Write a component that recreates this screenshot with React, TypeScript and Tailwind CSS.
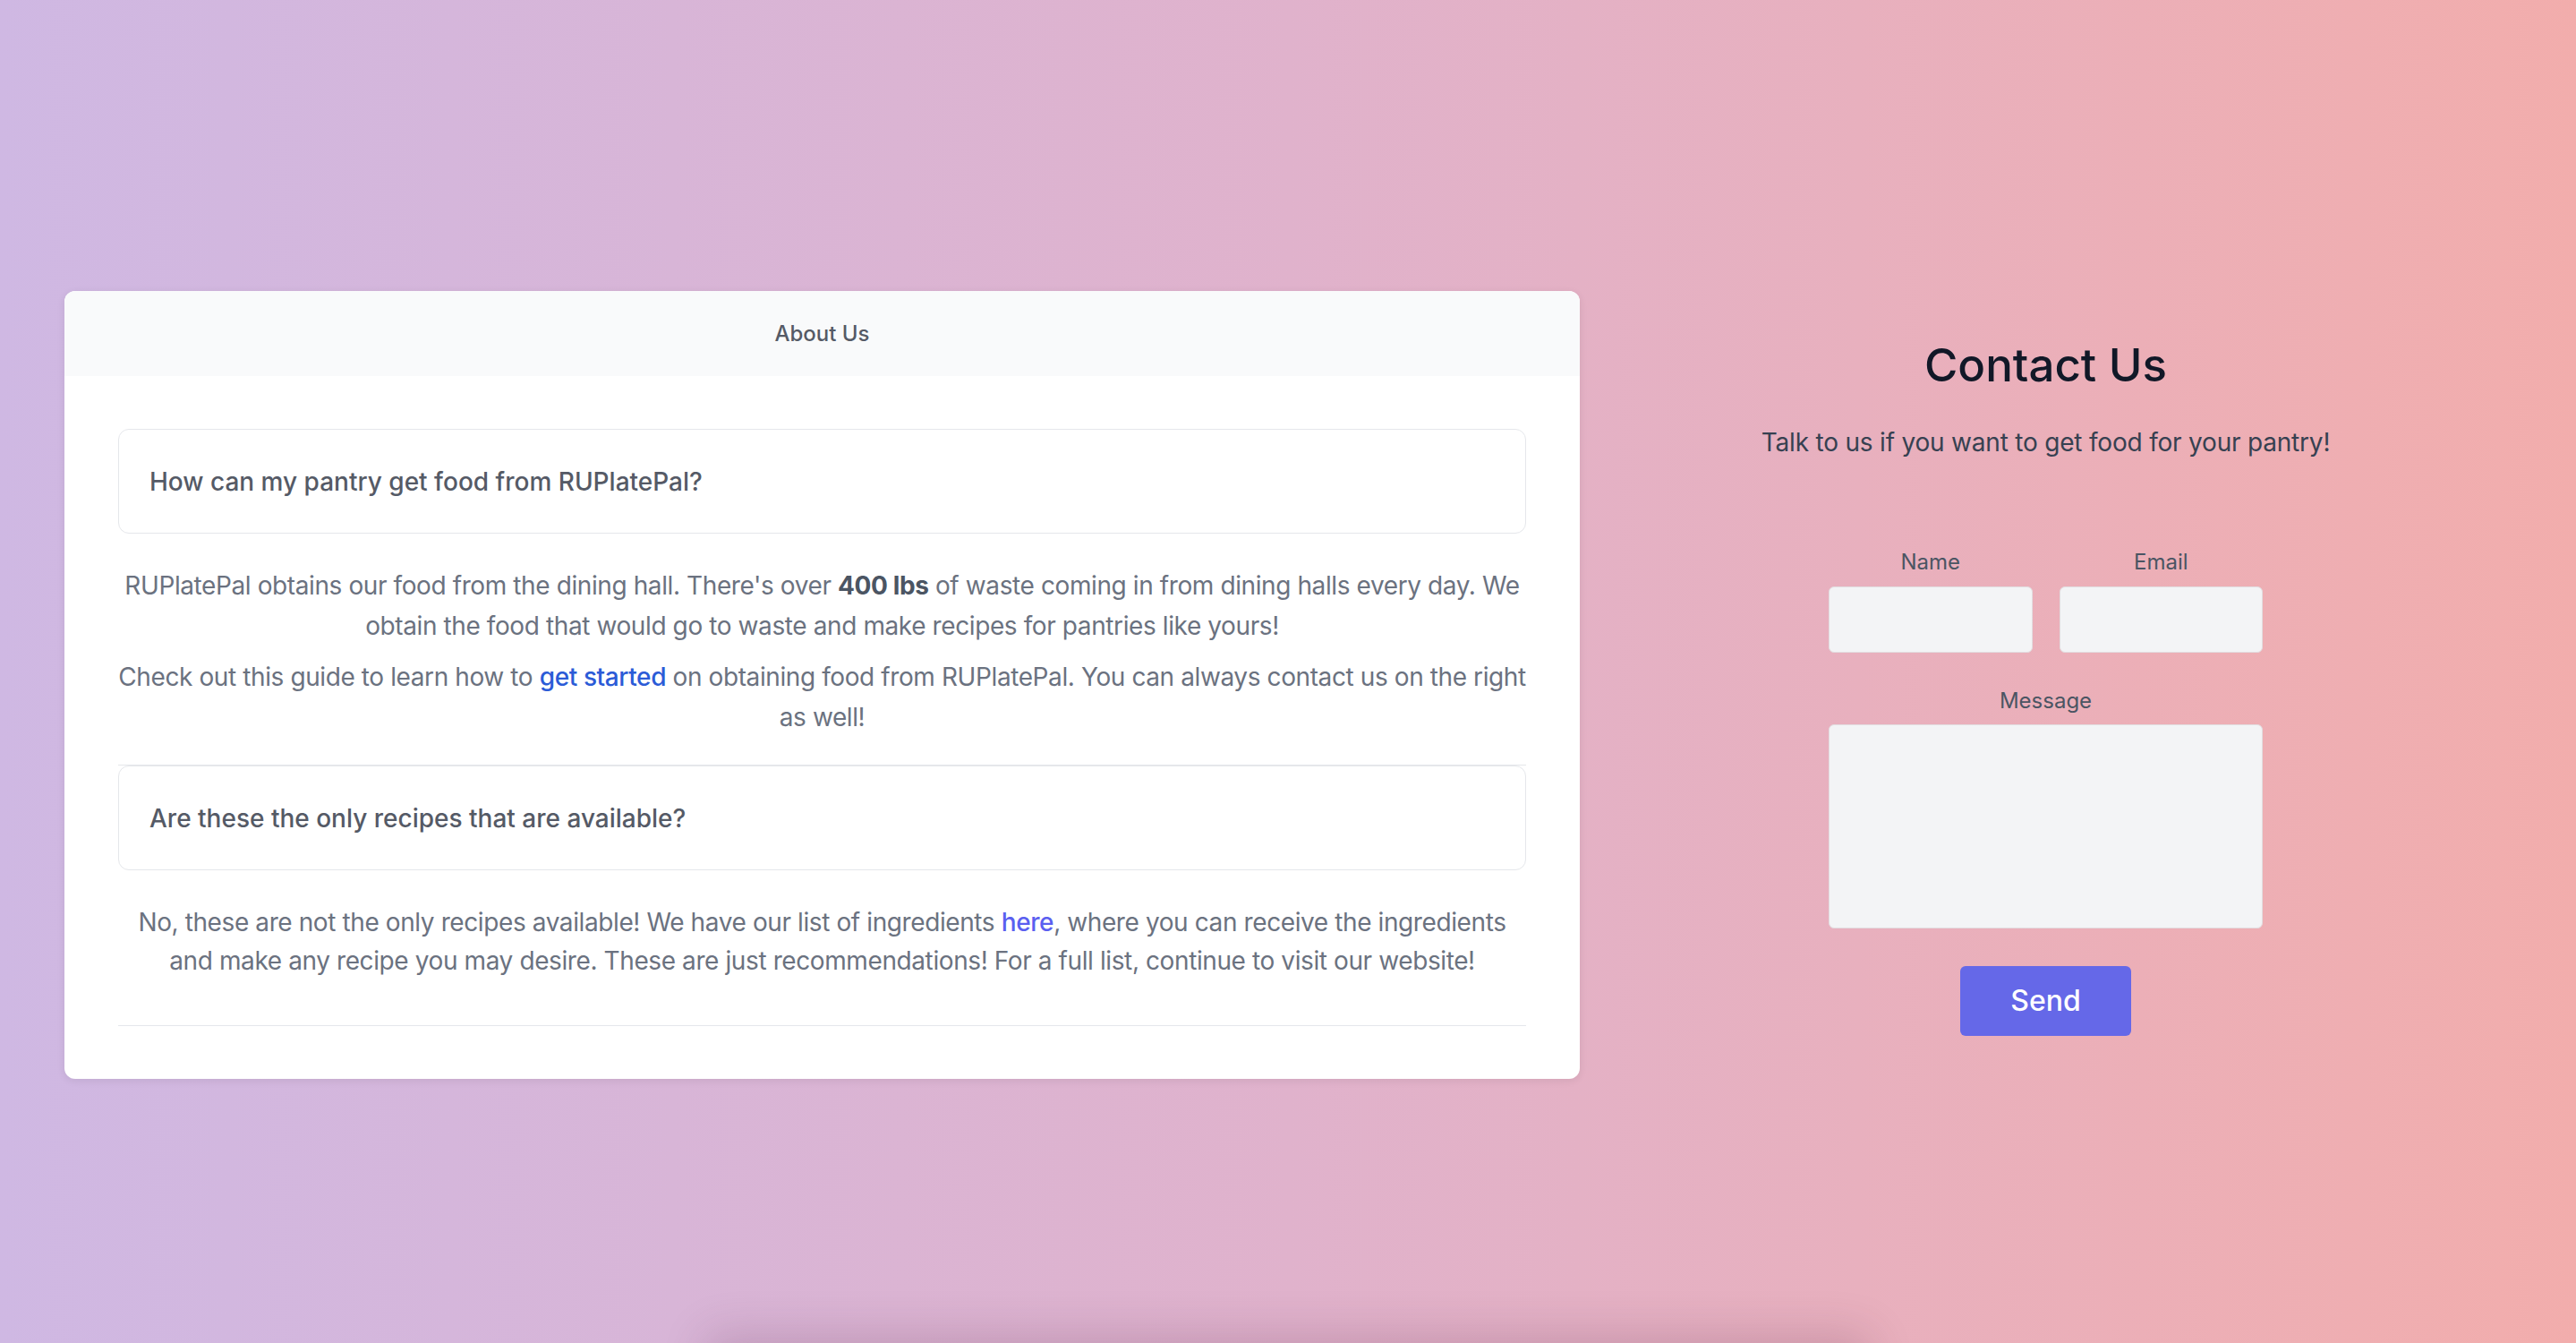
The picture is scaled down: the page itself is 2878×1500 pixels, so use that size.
export default function App() {
  return (
    <div className="min-h-screen bg-gradient-to-r from-[#cfb8e3] via-[#e0b2cc] to-[#f2adac] font-['Inter',sans-serif]">
      <section className="flex h-[1500px] items-start px-[72px] pt-[325px]">
        <div className="flex w-full items-center">
          {/* About card */}
          <div className="w-[1693px] shrink-0 overflow-hidden rounded-xl bg-white shadow-[0_2px_10px_rgba(0,0,0,0.08)]">
            <div className="flex h-[95px] items-center justify-center bg-[#f9fafb] text-[24px] font-medium text-[#555a66]">
              About Us
            </div>
            <div className="px-[60px] pb-[59px] pt-[59px]">
              <div className="border-b border-[#e5e7eb] pb-[30px]">
                <div className="flex h-[117px] items-center rounded-xl border border-[#e5e7eb] px-[34px] text-[28px] font-medium text-[#555a66]">
                  How can my pantry get food from RUPlatePal?
                </div>
                <div className="pt-[36px] text-center text-[28px] leading-[45px] tracking-[-0.4px] text-[#6b7280]">
                  <p>
                    RUPlatePal obtains our food from the dining hall. There's over{" "}
                    <span className="font-bold text-[#4b5563]">400 lbs</span> of waste coming in from
                    dining halls every day. We obtain the food that would go to waste and make recipes
                    for pantries like yours!
                  </p>
                  <p className="mt-[12px]">
                    Check out this guide to learn how to{" "}
                    <a href="#" className="font-medium text-[#2b5bd7]">
                      get started
                    </a>{" "}
                    on obtaining food from RUPlatePal. You can always contact us on the right as well!
                  </p>
                </div>
              </div>
              <div className="border-b border-[#e5e7eb] pb-[50px]">
                <div className="flex h-[117px] items-center rounded-xl border border-[#e5e7eb] px-[34px] text-[28px] font-medium text-[#555a66]">
                  Are these the only recipes that are available?
                </div>
                <div className="pt-[37px] text-center text-[28px] leading-[43px] tracking-[-0.4px] text-[#6b7280]">
                  <p>
                    No, these are not the only recipes available! We have our list of ingredients{" "}
                    <a href="#" className="font-medium text-[#5b5ff0]">
                      here
                    </a>
                    , where you can receive the ingredients and make any recipe you may desire. These
                    are just recommendations! For a full list, continue to visit our website!
                  </p>
                </div>
              </div>
            </div>
          </div>

          {/* Contact */}
          <div className="flex flex-1 flex-col items-center pt-[8px]">
            <h1 className="text-[51px] font-medium leading-none text-[#111827]">Contact Us</h1>
            <p className="mt-[40px] text-[28px] leading-[42px] tracking-[-0.2px] text-[#374151]">
              Talk to us if you want to get food for your pantry!
            </p>
            <form className="mt-[95px] flex w-[485px] flex-col items-center">
              <div className="flex w-full gap-[30px]">
                <label className="flex flex-1 flex-col items-center">
                  <span className="text-[24px] leading-[36px] text-[#4b5563]">Name</span>
                  <input
                    type="text"
                    className="mt-[9px] h-[74px] w-full rounded-md border border-[#e2dde0] bg-[#f3f4f6] outline-none"
                  />
                </label>
                <label className="flex flex-1 flex-col items-center">
                  <span className="text-[24px] leading-[36px] text-[#4b5563]">Email</span>
                  <input
                    type="email"
                    className="mt-[9px] h-[74px] w-full rounded-md border border-[#e2dde0] bg-[#f3f4f6] outline-none"
                  />
                </label>
              </div>
              <label className="mt-[36px] flex w-full flex-col items-center">
                <span className="text-[24px] leading-[36px] text-[#4b5563]">Message</span>
                <textarea className="mt-[8px] h-[228px] w-full resize-none rounded-md border border-[#e2dde0] bg-[#f3f4f6] outline-none" />
              </label>
              <button
                type="button"
                className="mt-[42px] h-[78px] w-[191px] rounded-md bg-[#6568e8] text-[32px] font-medium text-white"
              >
                Send
              </button>
            </form>
          </div>
        </div>
      </section>
      <div className="mx-auto h-[300px] w-[1300px] rounded-xl bg-white shadow-[0_-10px_50px_rgba(80,30,60,0.18)]" />
    </div>
  );
}
